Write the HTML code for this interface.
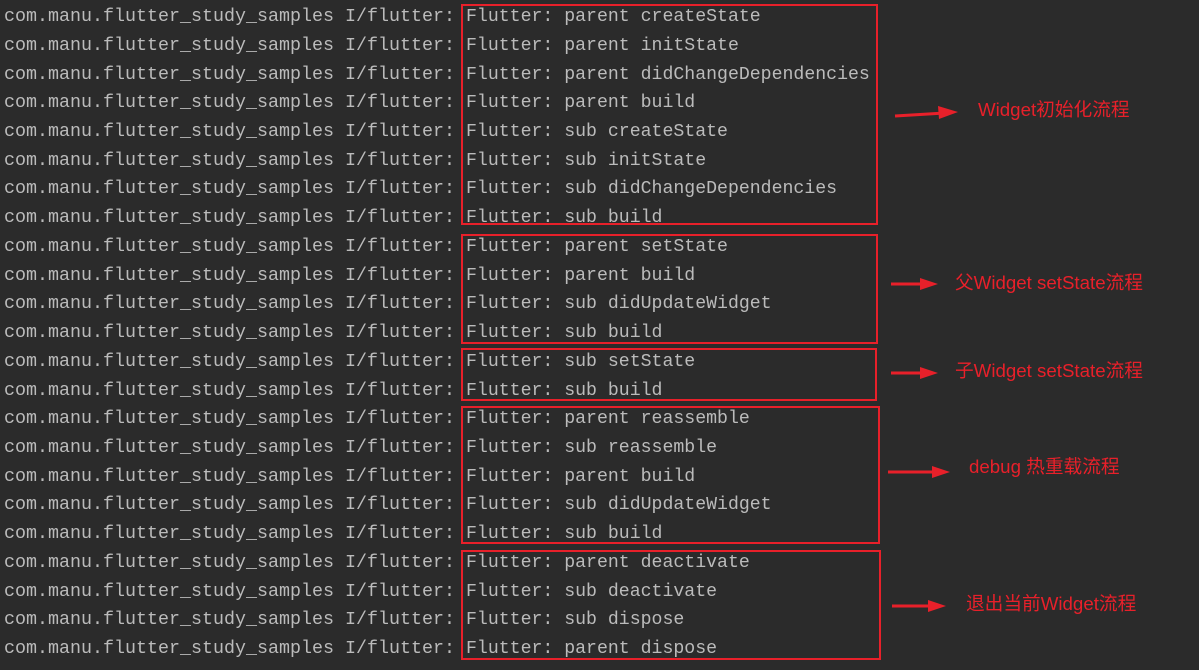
<!DOCTYPE html>
<html><head><meta charset="utf-8"><style>
html,body{margin:0;padding:0;background:#2b2b2b;width:1199px;height:670px;overflow:hidden;position:relative}
.l{position:absolute;font-family:"Liberation Mono",monospace;font-size:18.33px;color:#bbbbbb;white-space:pre;line-height:20px}
.r{font-size:18.2px}
.b{position:absolute;border:2px solid #e8202a;box-sizing:border-box}
.t{position:absolute;font-family:"Liberation Sans","Noto Sans CJK SC",sans-serif;font-size:18.7px;color:#e8202a;white-space:nowrap;line-height:20px}
svg{position:absolute;left:0;top:0}
</style></head><body>
<div id="c"></div>
<div class="b" style="left:461px;top:4px;width:417px;height:221px"></div>
<div class="b" style="left:461px;top:234px;width:417px;height:110px"></div>
<div class="b" style="left:461px;top:348px;width:416px;height:53px"></div>
<div class="b" style="left:461px;top:406px;width:419px;height:138px"></div>
<div class="b" style="left:461px;top:550px;width:420px;height:110px"></div>
<svg width="1199" height="670">
<g stroke="#e8202a" stroke-width="3" fill="#e8202a">
<line x1="895" y1="116" x2="945" y2="113"/><polygon points="938,106 958,112 939,119" stroke="none"/>
<line x1="891" y1="284" x2="925" y2="284"/><polygon points="920,278 938,284 920,290" stroke="none"/>
<line x1="891" y1="373" x2="925" y2="373"/><polygon points="920,367 938,373 920,379" stroke="none"/>
<line x1="888" y1="472" x2="938" y2="472"/><polygon points="932,466 950,472 932,478" stroke="none"/>
<line x1="892" y1="606" x2="934" y2="606"/><polygon points="928,600 946,606 928,612" stroke="none"/>
</g></svg>
<div class="t" style="left:978px;top:100px">Widget初始化流程</div>
<div class="t" style="left:955px;top:273px">父Widget setState流程</div>
<div class="t" style="left:955px;top:361px">子Widget setState流程</div>
<div class="t" style="left:969px;top:457px">debug 热重载流程</div>
<div class="t" style="left:966px;top:594px">退出当前Widget流程</div>
<script>
var m=["parent createState","parent initState","parent didChangeDependencies","parent build","sub createState","sub initState","sub didChangeDependencies","sub build","parent setState","parent build","sub didUpdateWidget","sub build","sub setState","sub build","parent reassemble","sub reassemble","parent build","sub didUpdateWidget","sub build","parent deactivate","sub deactivate","sub dispose","parent dispose"];
var h="";
for(var i=0;i<m.length;i++){var t=(7+i*28.73).toFixed(1);h+='<div class="l" style="left:-7px;top:'+t+'px">\'com.manu.flutter_study_samples I/flutter:</div><div class="l r" style="left:466px;top:'+t+'px">Flutter: '+m[i]+'</div>';}
document.getElementById("c").innerHTML=h;
</script>
</body></html>
